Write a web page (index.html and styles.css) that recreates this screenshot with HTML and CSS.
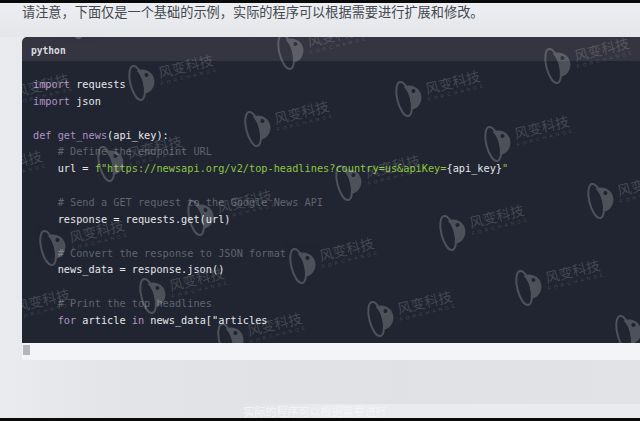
FILE: index.html
```html
<!DOCTYPE html>
<html lang="zh">
<head>
<meta charset="utf-8">
<title>python</title>
<link rel="stylesheet" href="styles.css">
</head>
<body>
<svg class="defs" width="0" height="0" aria-hidden="true">
  <symbol id="planet" viewBox="0 0 27 38">
    <path fill-rule="evenodd" d="M11.500 7.100 C19 5.500 26.500 11 26.500 19 C26.500 27 19 32.500 13.500 31 C15.800 23 15.500 14 11.500 7.100Z M20 11.500 A2 2 0 1 0 20 15.500 A2 2 0 1 0 20 11.500Z" fill="#fff"/>
    <ellipse cx="9" cy="19" rx="6.800" ry="17.500" fill="none" stroke="#fff" stroke-width="2"/>
  </symbol>
</svg>
<div class="topbar"></div>
<main class="page">
  <p class="intro">请注意，下面仅是一个基础的示例，实际的程序可以根据需要进行扩展和修改。</p>
  <section class="card">
    <div class="marks">
      <div class="wm w1"><svg class="planet"><use href="#planet"/></svg><div class="wm-t"><b>风变科技</b><i>FORCHANGE</i></div></div>
      <div class="wm w2"><svg class="planet"><use href="#planet"/></svg><div class="wm-t"><b>风变科技</b><i>FORCHANGE</i></div></div>
      <div class="wm w3"><svg class="planet"><use href="#planet"/></svg><div class="wm-t"><b>风变科技</b><i>FORCHANGE</i></div></div>
      <div class="wm w4"><svg class="planet"><use href="#planet"/></svg><div class="wm-t"><b>风变科技</b><i>FORCHANGE</i></div></div>
      <div class="wm w5"><svg class="planet"><use href="#planet"/></svg><div class="wm-t"><b>风变科技</b><i>FORCHANGE</i></div></div>
      <div class="wm w6"><svg class="planet"><use href="#planet"/></svg><div class="wm-t"><b>风变科技</b><i>FORCHANGE</i></div></div>
      <div class="wm w7"><svg class="planet"><use href="#planet"/></svg><div class="wm-t"><b>风变科技</b><i>FORCHANGE</i></div></div>
      <div class="wm w8"><svg class="planet"><use href="#planet"/></svg><div class="wm-t"><b>风变科技</b><i>FORCHANGE</i></div></div>
      <div class="wm w9"><svg class="planet"><use href="#planet"/></svg><div class="wm-t"><b>风变科技</b><i>FORCHANGE</i></div></div>
      <div class="wm w10"><svg class="planet"><use href="#planet"/></svg><div class="wm-t"><b>风变科技</b><i>FORCHANGE</i></div></div>
      <div class="wm w11"><svg class="planet"><use href="#planet"/></svg><div class="wm-t"><b>风变科技</b><i>FORCHANGE</i></div></div>
      <div class="wm w12"><svg class="planet"><use href="#planet"/></svg><div class="wm-t"><b>风变科技</b><i>FORCHANGE</i></div></div>
      <div class="wm w13"><svg class="planet"><use href="#planet"/></svg><div class="wm-t"><b>风变科技</b><i>FORCHANGE</i></div></div>
      <div class="wm w14"><svg class="planet"><use href="#planet"/></svg><div class="wm-t"><b>风变科技</b><i>FORCHANGE</i></div></div>
      <div class="wm w15"><svg class="planet"><use href="#planet"/></svg><div class="wm-t"><b>风变科技</b><i>FORCHANGE</i></div></div>
      <div class="wm w16"><svg class="planet"><use href="#planet"/></svg><div class="wm-t"><b>风变科技</b><i>FORCHANGE</i></div></div>
      <div class="wm w17"><svg class="planet"><use href="#planet"/></svg><div class="wm-t"><b>风变科技</b><i>FORCHANGE</i></div></div>
      <div class="wm w18"><svg class="planet"><use href="#planet"/></svg><div class="wm-t"><b>风变科技</b><i>FORCHANGE</i></div></div>
      <div class="wm w19"><svg class="planet"><use href="#planet"/></svg><div class="wm-t"><b>风变科技</b><i>FORCHANGE</i></div></div>
      <div class="wm w20"><svg class="planet"><use href="#planet"/></svg><div class="wm-t"><b>风变科技</b><i>FORCHANGE</i></div></div>
      <div class="wm w21"><svg class="planet"><use href="#planet"/></svg><div class="wm-t"><b>风变科技</b><i>FORCHANGE</i></div></div>
      <div class="wm w22"><svg class="planet"><use href="#planet"/></svg><div class="wm-t"><b>风变科技</b><i>FORCHANGE</i></div></div>
    </div>
    <header class="card-head">python</header>
    <pre class="code"><span class="kw">import</span> requests
<span class="kw">import</span> json

<span class="kw">def</span> <span class="fn">get_news</span>(api_key):
    <span class="cm"># Define the endpoint URL</span>
    url = <span class="str">f"https://newsapi.org/v2/top-headlines?country=us&amp;apiKey=</span>{api_key}<span class="str">"</span>

    <span class="cm"># Send a GET request to the Google News API</span>
    response = requests.get(url)

    <span class="cm"># Convert the response to JSON format</span>
    news_data = response.json()

    <span class="cm"># Print the top headlines</span>
    <span class="kw">for</span> article <span class="kw">in</span> news_data["articles</pre>
    <div class="scroller"><span class="thumb"></span></div>
  </section>
  <div class="spacer"></div>
  <div class="footer-strip"><span class="ghost">实际的程序可以根据需要进行</span></div>
</main>
<div class="bottombar"></div>
</body>
</html>
```
FILE: styles.css
```css
* { box-sizing: border-box; }
html, body { margin: 0; height: 100%; }
body {
  width: 640px;
  height: 421px;
  overflow: hidden;
  display: flex;
  flex-direction: column;
  background: #e3e5e9;
  font-family: "Noto Sans CJK SC", "Liberation Sans", sans-serif;
}
.defs { position: absolute; }
.topbar { height: 3px; flex: none; background: #0a0a0a; }
.bottombar { height: 3px; flex: none; background: #0a0a0a; }
.page {
  flex: 1;
  min-height: 0;
  display: flex;
  flex-direction: column;
  background: linear-gradient(90deg, #e9ebef 0, #e2e4e8 120px, #dfe1e5 400px, #e1e3e7 640px);
}
.intro {
  margin: 0;
  padding: 0 0 0 22px;
  height: 34px;
  line-height: 18px;
  font-size: 13.2px;
  color: #44484f;
  white-space: nowrap;
  background: linear-gradient(180deg, #eceef1 0, #e4e6ea 100%);
}
.card {
  position: relative;
  margin-left: 22px;
  width: 618px;
  flex: none;
  background: #f2f4f7;
}
.marks {
  position: absolute;
  inset: 0 0 17px 0;
  overflow: hidden;
  z-index: 1;
  border-radius: 5px 0 0 0;
  color: rgba(255, 255, 255, .17);
  pointer-events: none;
}
.wm {
  position: absolute;
  display: flex;
  align-items: center;
  gap: 5px;
  width: 100px;
  margin-top: -2px;
  transform: rotate(-14deg);
  transform-origin: 13px 19px;
}
.planet { width: 27px; height: 38px; flex: none; opacity: .2; }
.wm-t { display: flex; flex-direction: column; margin-top: -3px; }
.wm-t b {
  font-weight: 400;
  font-size: 14px;
  line-height: 16px;
  white-space: nowrap;
}
.wm-t i {
  font-style: normal;
  font-family: "Liberation Sans", sans-serif;
  font-size: 5px;
  line-height: 7px;
  letter-spacing: 3.1px;
  white-space: nowrap;
}
.w1  { left: 106px; top: 28px; }
.w2  { left: 255px; top: -3px; }
.w3  { left: 522px; top: 11px; }
.w4  { left: 373px; top: 44px; }
.w5  { left: 222px; top: 74px; }
.w6  { left: 462px; top: 89px; }
.w7  { left: 75px; top: 109px; }
.w8  { left: 313px; top: 128px; }
.w9  { left: 565px; top: 146px; }
.w10 { left: 165px; top: 163px; }
.w11 { left: 417px; top: 178px; }
.w12 { left: 17px; top: 193px; }
.w13 { left: 493px; top: 233px; }
.w14 { left: 267px; top: 211px; }
.w15 { left: 117px; top: 241px; }
.w16 { left: 345px; top: 264px; }
.w17 { left: 593px; top: 278px; }
.w18 { left: 195px; top: 286px; }
.w19 { left: 44px; top: -34px; }
.w20 { left: -38px; top: 47px; }
.w21 { left: -65px; top: 124px; }
.w22 { left: -37px; top: 262px; }
.card-head {
  height: 24px;
  padding-left: 9px;
  background: #343540;
  border-radius: 5px 0 0 0;
  color: #d9dadf;
  font-family: "DejaVu Sans Mono", monospace;
  font-size: 9.6px;
  font-weight: 700;
  line-height: 27px;
}
.code {
  margin: 0;
  height: 282px;
  padding: 15px 0 0 11px;
  overflow: hidden;
  background: #202531;
  color: #e6e7ea;
  font-family: "DejaVu Sans Mono", monospace;
  font-size: 10.25px;
  line-height: 16.86px;
}
.kw { color: #b393c4; }
.fn { color: #a98fc4; }
.cm { color: #5f646d; }
.str { color: #8dc63f; }
.scroller {
  height: 17px;
  padding: 2px 0 0 1px;
  background: #f2f4f7;
}
.thumb { display: block; width: 7px; height: 10px; background: #b4b6bb; }
.spacer { flex: none; height: 44px; }
.footer-strip {
  flex: 1;
  display: flex;
  justify-content: center;
  align-items: center;
  padding-right: 10px;
  background: linear-gradient(90deg, transparent 230px, #e9ebef 340px);
}
.ghost {
  font-size: 11px;
  line-height: 14px;
  color: #f3f4f7;
}
```
